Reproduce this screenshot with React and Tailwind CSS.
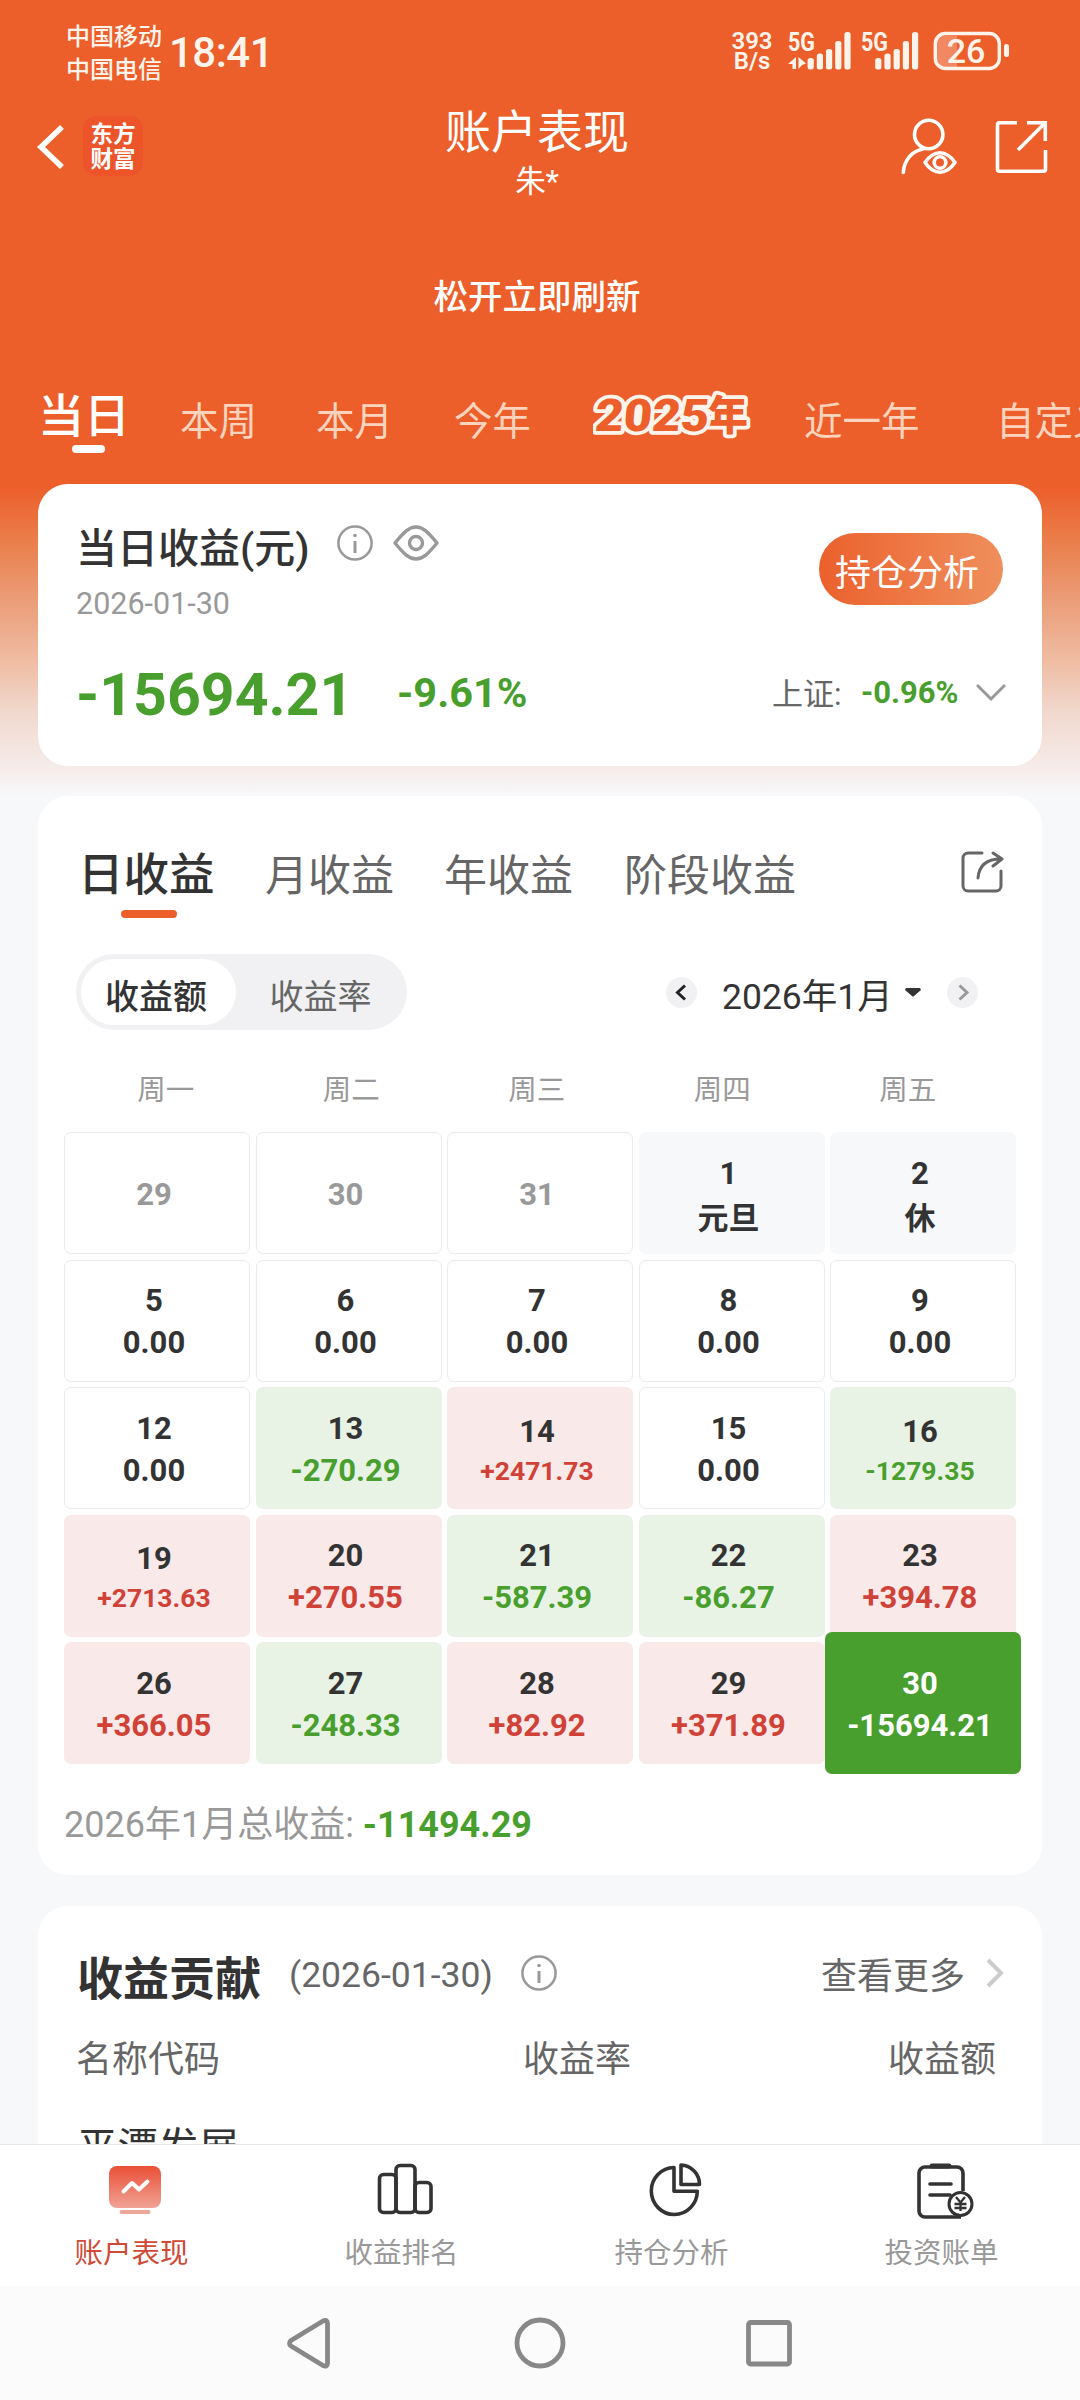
import clsx from "clsx";

const periods = [
  { name: "本周", cls: "ml-[50px] w-[76px]" },
  { name: "本月", cls: "ml-[60px] w-[76px]" },
  { name: "今年", cls: "ml-[62px] w-[76px]" },
];

const weekdays = ["周一", "周二", "周三", "周四", "周五"];

// type: out = previous month, rest = market closed, flat / up / down, active = selected
const days = [
  { d: 29, type: "out" },
  { d: 30, type: "out" },
  { d: 31, type: "out" },
  { d: 1, v: "元旦", type: "rest" },
  { d: 2, v: "休", type: "rest" },
  { d: 5, v: "0.00", type: "flat" },
  { d: 6, v: "0.00", type: "flat" },
  { d: 7, v: "0.00", type: "flat" },
  { d: 8, v: "0.00", type: "flat" },
  { d: 9, v: "0.00", type: "flat" },
  { d: 12, v: "0.00", type: "flat" },
  { d: 13, v: "-270.29", type: "down" },
  { d: 14, v: "+2471.73", type: "up", small: true },
  { d: 15, v: "0.00", type: "flat" },
  { d: 16, v: "-1279.35", type: "down", small: true },
  { d: 19, v: "+2713.63", type: "up", small: true },
  { d: 20, v: "+270.55", type: "up" },
  { d: 21, v: "-587.39", type: "down" },
  { d: 22, v: "-86.27", type: "down" },
  { d: 23, v: "+394.78", type: "up" },
  { d: 26, v: "+366.05", type: "up" },
  { d: 27, v: "-248.33", type: "down" },
  { d: 28, v: "+82.92", type: "up" },
  { d: 29, v: "+371.89", type: "up" },
  { d: 30, v: "-15694.21", type: "active" },
];

const cellStyle = {
  out: "border border-[#ebebeb] text-[#999]",
  rest: "bg-[#f7f8fa] text-[#333]",
  flat: "border border-[#ebebeb] text-[#333]",
  up: "bg-[#fae9e9] text-[#333]",
  down: "bg-[#e8f3e6] text-[#333]",
  active: "bg-[#489f2d] text-white relative -mx-[5px] -my-[10px]",
};

const valueStyle = {
  rest: "text-[#333] font-semibold pt-[3px] -mb-[3px]",
  flat: "text-[#333]",
  up: "text-[#d04237]",
  down: "text-[#489f2d]",
  active: "text-white",
};

export default function App() {
  return (
    <div className="w-[1080px] h-[2400px] overflow-hidden flex flex-col font-['Roboto','Noto_Sans_CJK_SC',sans-serif] bg-[#f7f8fa] bg-[linear-gradient(to_bottom,#ec5f2b_0px,#ec5f2b_488px,#ea7f4c_543px,#eb9d78_600px,#efbca2_660px,#f1d7cc_710px,#f5eae7_762px,#f7f8fa_795px)]">
      <StatusBar />
      <TitleBar />
      <div className="h-[162px] pt-[75px] text-center text-[34.500px] leading-[44px] font-medium text-white pr-[6px]">
        松开立即刷新
      </div>
      <PeriodTabs />
      <main className="h-[1660px] px-[38px] overflow-hidden">
        <SummaryCard />
        <CalendarCard />
        <ContributionCard />
      </main>
      <BottomNav />
      <SystemNav />
    </div>
  );
}

function StatusBar() {
  return (
    <div className="h-[100px] flex text-[#fff4ec]">
      <div className="ml-[66px] mt-[21px] text-[24px] leading-[33px] w-[98px] whitespace-nowrap font-medium">
        <div>中国移动</div>
        <div>中国电信</div>
      </div>
      <div className="ml-[5px] mt-[28px] text-[42px] leading-[50px] font-medium tracking-[-0.5px]">18:41</div>
      <div className="ml-auto mt-[31px] w-[46px] text-center text-[24px] leading-[20px] font-semibold">
        <div>393</div>
        <div>B/s</div>
      </div>
      <svg className="ml-[13px] mr-[64px]" width="228" height="100" viewBox="788 0 228 100" fill="currentColor">
        <text x="788" y="51" fontSize="26" fontWeight="700" textLength="27" lengthAdjust="spacingAndGlyphs">5G</text>
        <text x="861" y="51" fontSize="26" fontWeight="700" textLength="27" lengthAdjust="spacingAndGlyphs">5G</text>
        <path d="M796 57v12h-3.500v-5h-4.500zM798.500 57l7.500 6.500-4 1.500-3.500 4z" />
        <Bars x={807.6} />
        <Bars x={875.2} />
        <rect x="937" y="36" width="20" height="31" opacity=".28" />
        <rect x="935.300" y="33.500" width="64" height="35" rx="10" fill="none" stroke="currentColor" strokeWidth="3.400" />
        <rect x="1004" y="44" width="5" height="13" rx="2.500" />
        <text x="966" y="63" fontSize="34" fontWeight="500" textAnchor="middle">26</text>
      </svg>
    </div>
  );
}

function Bars({ x }) {
  const tops = [58, 53.5, 49, 41, 32];
  return tops.map((t, i) => <rect key={t} x={x + i * 9.2} y={t} width="6.200" height={69.5 - t} rx="2.500" />);
}

function TitleBar() {
  return (
    <div className="h-[100px] flex justify-between text-white">
      <div className="flex w-[230px]">
        <svg className="ml-[36px] mt-[22px]" width="30" height="50" fill="none" stroke="currentColor" strokeWidth="5.500">
          <path d="M26 5 5 25l21 20" />
        </svg>
        <div className="ml-[17px] mt-[16px] size-[60px] rounded-[13px] bg-[#ed542a] pt-[6px] text-center text-[22.500px] leading-[25px] font-bold">
          <div>东方</div>
          <div>财富</div>
        </div>
      </div>
      <div className="w-[300px] text-center pr-[6px] pt-[6px]">
        <div className="text-[46px] leading-[52px]">账户表现</div>
        <div className="text-[30.500px] leading-[44px] mt-[2px]">朱*</div>
      </div>
      <svg width="230" height="100" viewBox="850 100 230 100" fill="none" stroke="currentColor" strokeWidth="3.600" strokeLinecap="round">
        <circle cx="928.700" cy="134.500" r="14.200" />
        <path d="M923 149c-11 2-19 11-19.700 23.500" />
        <path d="M925 162.500c9-13 21-13 30 0-9 13-21 13-30 0z" strokeLinejoin="round" />
        <circle cx="940" cy="162.500" r="5.800" />
        <path d="M1017 122.800h-17.500a2 2 0 0 0-2 2v44.500a2 2 0 0 0 2 2h44a2 2 0 0 0 2-2V150" strokeLinecap="butt" />
        <path d="M1027 122.800h18.300V141M1044.500 123.500l-26.500 26.500" strokeLinecap="butt" />
      </svg>
    </div>
  );
}

function PeriodTabs() {
  return (
    <div className="h-[122px] flex items-start whitespace-nowrap text-[38.500px] leading-[46px] text-[#fdd3bd] *:shrink-0">
      <div className="ml-[38px] mt-[30px] w-[92px]">
        <div className="text-[46px] leading-[48px] font-medium text-white">当日</div>
        <div className="w-[33px] h-[8px] rounded-full bg-white ml-[34px] mt-[5px]" />
      </div>
      {periods.map((p) => (
        <div key={p.name} className={clsx("mt-[37px]", p.cls)}>{p.name}</div>
      ))}
      <YearBadge />
      <div className="ml-[50px] mt-[37px] w-[116px]">近一年</div>
      <div className="ml-[76px] mt-[37px]">自定义</div>
    </div>
  );
}

// outlined logo style label for the yearly report
function YearBadge() {
  return (
    <svg className="ml-[63px] mt-[26px]" width="161" height="56" viewBox="592 389 161 56" fill="#ec5f2b" stroke="#fff4ec" strokeWidth="7.500" strokeLinejoin="round" paintOrder="stroke" fontWeight="900">
      <text x="706" y="430.500" fontSize="41">年</text>
      <text x="0" y="0" fontSize="45" textLength="114" lengthAdjust="spacingAndGlyphs" transform="translate(593 432) skewX(-5)">2025</text>
    </svg>
  );
}

function SummaryCard() {
  return (
    <section className="h-[282px] rounded-[30px] bg-white pl-[38px] pr-[39px] text-[#333]">
      <div className="flex justify-between">
        <div>
          <div className="flex">
            <h1 className="mt-[38px] text-[41px] leading-[54px] font-medium w-[261px] whitespace-nowrap">当日收益(元)</h1>
            <InfoIcon className="mt-[41px]" />
            <svg className="ml-[20px] mt-[41px]" width="46" height="36" fill="none" stroke="#999" strokeWidth="3.400">
              <path d="M2 18C11 7 16 2 23 2s12 5 21 16C35 29 30 34 23 34S11 29 2 18z" strokeLinejoin="round" />
              <circle cx="23" cy="18" r="6.500" />
            </svg>
          </div>
          <div className="mt-[8px] text-[30.500px] leading-[40px] text-[#999]">2026-01-30</div>
        </div>
        <button className="mt-[49px] w-[184px] h-[72px] rounded-full bg-linear-to-r from-[#eb602b] to-[#ef8f5c] text-white text-[36px] pt-[9px] pr-[8px]">
          持仓分析
        </button>
      </div>
      <div className="flex font-bold text-[#489f2d] mt-[36px]">
        <div className="w-[321px] text-[59px] leading-[70px]">-15694.21</div>
        <div className="text-[41.500px] leading-[66px]">-9.61%</div>
        <div className="ml-auto flex text-[31px] leading-[65px]">
          <div className="text-[#666] text-[31px] leading-[69px] w-[89px] font-normal">上证:</div>
          <div className="w-[115px]">-0.96%</div>
          <svg className="mt-[23px] -mr-[3px]" width="30" height="20" fill="none" stroke="#999" strokeWidth="3">
            <path d="M1 2l14 14L29 2" />
          </svg>
        </div>
      </div>
    </section>
  );
}

function CalendarCard() {
  return (
    <section className="mt-[30px] h-[1079px] rounded-[30px] bg-white text-[#666]">
      <div className="flex h-[158px] pt-[48px] pl-[40px] text-[43px] leading-[64px] whitespace-nowrap">
        <div className="w-[187px]">
          <div className="text-[45.500px] font-medium text-[#333]">日收益</div>
          <div className="w-[56px] h-[8px] rounded-full bg-[#ec5f2b] ml-[43px] mt-[2px]" />
        </div>
        <div className="w-[179px]">月收益</div>
        <div className="w-[180px]">年收益</div>
        <div>阶段收益</div>
        <svg className="ml-auto mr-[38px] mt-[7px]" width="43" height="43" fill="none" stroke="#666" strokeWidth="3" strokeLinecap="round">
          <path d="M21 2H7a5 5 0 0 0-5 5v28a5 5 0 0 0 5 5h28a5 5 0 0 0 5-5V20" />
          <path d="M17 27C18 14 26 8 40 8M32 2l9 6-9 7" strokeLinejoin="round" />
        </svg>
      </div>
      <div className="flex pl-[38px] pr-[64px]">
        <div className="w-[331px] h-[76px] rounded-full bg-[#f1f1f4] p-[5px] flex text-[34px] leading-[76px]">
          <div className="w-[155px] h-[66px] rounded-full bg-white text-center text-[#333] font-medium pr-[5px]">收益额</div>
          <div className="flex-1 text-center pl-[3px]">收益率</div>
        </div>
        <div className="ml-auto flex text-[#333]">
          <svg className="mt-[23px]" width="31" height="31" fill="none">
            <circle cx="15.500" cy="15.500" r="15.500" fill="#f1f1f3" />
            <path d="M19 8.500l-7.500 7 7.500 7" stroke="#222" strokeWidth="3" />
          </svg>
          <div className="w-[183px] ml-[25px] text-[35.500px] leading-[87px] h-[76px] whitespace-nowrap">2026年1月</div>
          <svg className="mt-[34px]" width="16" height="9" fill="#333">
            <path d="M1 0h14l1 2-7 6q-1 1-2 0L0 2z" />
          </svg>
          <svg className="mt-[23px] ml-[26px]" width="31" height="31" fill="none">
            <circle cx="15.500" cy="15.500" r="15.500" fill="#f1f1f3" />
            <path d="M12.500 8.500l7.500 7-7.500 7" stroke="#999" strokeWidth="3" />
          </svg>
        </div>
      </div>
      <div className="flex pl-[35px] mt-[41px] text-[28.500px] leading-[40px] text-[#999]">
        {weekdays.map((w) => (
          <div key={w} className="w-[185.500px] text-center">{w}</div>
        ))}
      </div>
      <div className="mt-[21px] mx-[26px] grid grid-cols-5 grid-rows-[repeat(5,122px)] gap-x-[5.500px] gap-y-[5.500px]">
        {days.map((day, i) => (
          <DayCell key={i} {...day} />
        ))}
      </div>
      <div className="pl-[26px] mt-[35px] text-[36px] leading-[52px] text-[#999]">
        2026年1月总收益: <span className="font-bold text-[#489f2d]">-11494.29</span>
      </div>
    </section>
  );
}

function DayCell({ d, v, type, small }) {
  return (
    <div className={clsx("rounded-[7px] flex flex-col items-center justify-center pr-[6px] pt-[3px] text-[31px] leading-[42px] font-bold", cellStyle[type])}>
      <div>{d}</div>
      {v && <div className={clsx(valueStyle[type], small && "text-[26.500px] leading-[36px]")}>{v}</div>}
    </div>
  );
}

function ContributionCard() {
  return (
    <section className="mt-[31px] h-[300px] rounded-t-[30px] bg-white pl-[39px] pr-[37px] text-[#666] text-[36px] whitespace-nowrap">
      <div className="flex pt-[38px]">
        <h2 className="w-[212px] text-[46px] leading-[71px] font-bold text-[#333]">收益贡献</h2>
        <div className="w-[232px] text-[35.500px] leading-[62px]">(2026-01-30)</div>
        <InfoIcon className="mt-[11px]" />
        <div className="ml-auto leading-[67px]">查看更多</div>
        <svg className="ml-[20px] mt-[14px]" width="20" height="30" fill="none" stroke="#ccc" strokeWidth="4">
          <path d="M3 2l13 13L3 28" />
        </svg>
      </div>
      <div className="flex leading-[50px] mt-[20px] pr-[9px]">
        <div className="flex-1 -ml-px">名称代码</div>
        <div className="flex-1 text-center pl-[82px]">收益率</div>
        <div className="flex-1 text-right">收益额</div>
      </div>
      <div className="mt-[33px] text-[40.500px] leading-[60px] text-[#333]">平潭发展</div>
    </section>
  );
}

function BottomNav() {
  return (
    <nav className="h-[142px] shrink-0 border-t border-[#e6e6e6] bg-white grid grid-cols-4 text-[28.500px] leading-[40px] text-[#999]">
      <NavItem label="账户表现" active>
        <defs>
          <linearGradient id="screen" x1="0" y1="0" x2="0" y2="1">
            <stop offset="0" stopColor="#ea4f36" />
            <stop offset="1" stopColor="#f1a396" />
          </linearGradient>
        </defs>
        <rect x="4" y="5" width="52" height="42" rx="8" fill="url(#screen)" />
        <rect x="14.500" y="49" width="31" height="4" rx="2" fill="#eca79a" />
        <path d="M18.500 30.500l8.500-8.500 7 6.500 8.500-8" stroke="#fff" strokeWidth="4" strokeLinecap="round" strokeLinejoin="round" />
      </NavItem>
      <NavItem label="收益排名">
        <rect x="4.500" y="13.500" width="16.500" height="38" rx="4" />
        <rect x="21" y="4.500" width="19" height="47" rx="4" />
        <rect x="40" y="21.500" width="16" height="30" rx="4" />
      </NavItem>
      <NavItem label="持仓分析">
        <path d="M29 6.500a23 23.500 0 1 0 23.300 23.800H29z" strokeLinejoin="round" />
        <path d="M36 4v19.500h18.500A19.500 19.500 0 0 0 36 4z" strokeLinejoin="round" />
      </NavItem>
      <NavItem label="投资账单">
        <path d="M48 30V12a6 6 0 0 0-6-6H10a6 6 0 0 0-6 6v38a6 6 0 0 0 6 6h36" />
        <path d="M17 5h17" strokeWidth="5" strokeLinecap="round" />
        <path d="M15 23h21M15 34h20" strokeLinecap="round" />
        <circle cx="45.500" cy="43" r="11.500" fill="#fff" strokeWidth="3" />
        <path d="M41 36l4.500 5.500L50 36M45.500 42v8M39.500 43h12M39.500 47h12" strokeWidth="2.300" />
      </NavItem>
    </nav>
  );
}

function NavItem({ label, active, children }) {
  return (
    <div className={clsx("flex flex-col items-center pt-[16px]", active && "text-[#d04a35]")}>
      <svg className="-ml-px" width="60" height="60" fill="none" stroke={active ? "none" : "#333"} strokeWidth="3.600">
        {children}
      </svg>
      <div className="mt-[13px] pr-[7px]">{label}</div>
    </div>
  );
}

function SystemNav() {
  return (
    <div className="h-[114px] shrink-0 bg-[#fbfbfb] flex justify-center">
      <svg width="560" height="114" viewBox="260 0 560 114" fill="none" stroke="#888" strokeWidth="4.800" strokeLinejoin="round">
        <path d="M291 54.500L323 35q4.500-2 4.500 2.500v39.500q0 4.500-4.500 2.500L291 60q-3-2.500 0-5.500z" />
        <circle cx="540" cy="57" r="23" />
        <rect x="748.500" y="36.500" width="41" height="41.500" rx="2" />
      </svg>
    </div>
  );
}

function InfoIcon({ className }) {
  return (
    <svg className={className} width="36" height="36" fill="none" stroke="#999" strokeWidth="2.500">
      <circle cx="18" cy="18" r="16.600" />
      <path d="M18 16v12" strokeWidth="3" />
      <circle cx="18" cy="10.500" r="1.800" fill="#999" stroke="none" />
    </svg>
  );
}
